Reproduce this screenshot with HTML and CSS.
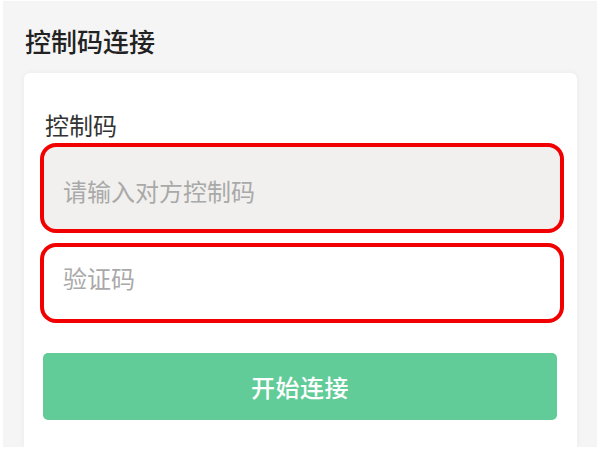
FILE: index.html
```html
<!DOCTYPE html>
<html lang="zh-CN">
  <head>
    <meta charset="UTF-8" />
    <meta name="viewport" content="width=device-width, initial-scale=1.0" />
    <title>控制码连接</title>
    <link rel="stylesheet" href="styles.css">
  </head>
  <body>
    <main class="screen">
      <h1 class="page-title">控制码连接</h1>
      <section class="card">
        <div class="label">控制码</div>
        <div class="field field-code">
          <input type="text" placeholder="请输入对方控制码" />
        </div>
        <div class="field field-verify">
          <input type="text" placeholder="验证码" />
        </div>
        <button class="connect-btn">开始连接</button>
      </section>
    </main>
  </body>
</html>
```

FILE: styles.css
```css
body {
  margin: 0;
  background-color: #ffffff;
  font-family: "Noto Sans CJK SC", "Noto Sans", sans-serif;
}

.screen {
  display: flex;
  flex-direction: column;
  box-sizing: border-box;
  height: 446px;
  margin: 1px 3px 3px 3px;
  padding: 22px 20px 0 21px;
  background-color: #f5f5f5;
  overflow: hidden;
}

.page-title {
  margin: 0 0 14px 1px;
  font-size: 26px;
  line-height: 36px;
  font-weight: 500;
  color: #222;
}

.card {
  flex: 1;
  padding: 37px 20px 0 19px;
  background-color: #fff;
  border-radius: 6px 6px 0 0;
  box-shadow: 0 0 6px rgba(0, 0, 0, 0.05);
}

.label {
  margin: 0 0 3px 2px;
  font-size: 24px;
  line-height: 30px;
  color: #333;
}

.field {
  box-sizing: border-box;
  margin: 0 -7px 0 -3px;
  border: 4px solid #f20000;
  border-radius: 16px;
  overflow: hidden;
}

.field input {
  display: block;
  box-sizing: border-box;
  width: 100%;
  height: 100%;
  margin: 0;
  border: none;
  outline: none;
  padding: 0 0 0 19px;
  background: transparent;
  font-family: inherit;
  font-size: 24px;
  color: #333;
}

.field input::placeholder {
  color: #a9a9a9;
}

.field-code {
  height: 90px;
  background-color: #f1f0ee;
}

.field-code input {
  padding-top: 4px;
}

.field-verify {
  height: 80px;
  margin-top: 10px;
  background-color: #fff;
}

.field-verify input {
  padding-bottom: 12px;
  border-bottom: 1px solid #ececec;
  height: 73px;
}

.connect-btn {
  display: block;
  width: 100%;
  height: 67px;
  margin-top: 30px;
  border: none;
  border-radius: 5px;
  background-color: #62cc98;
  color: #fff;
  font-family: inherit;
  font-size: 24px;
  font-weight: 500;
  letter-spacing: 0.5px;
}
```
